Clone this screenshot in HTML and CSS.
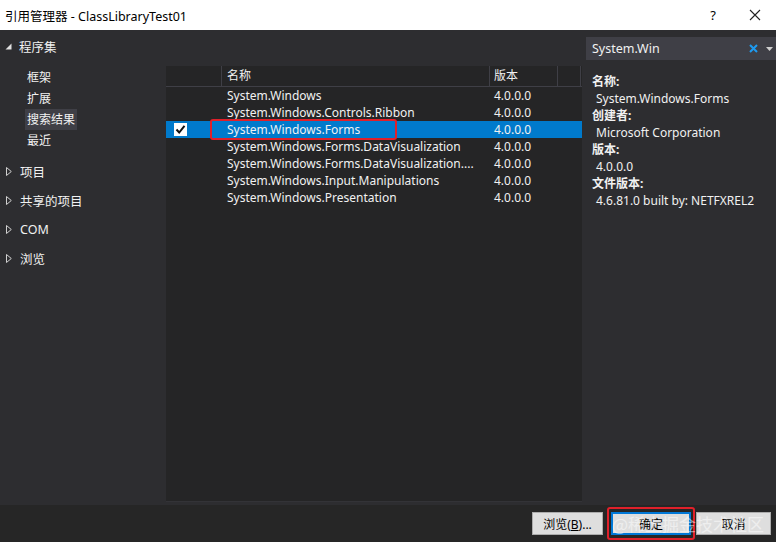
FILE: index.html
```html
<!DOCTYPE html>
<html lang="zh-CN">
<head>
<meta charset="utf-8">
<title>引用管理器</title>
<link rel="stylesheet" href="styles.css">
</head>
<body>
<div class="window">
  <div class="titlebar">
    <span class="title">引用管理器 - ClassLibraryTest01</span>
    <span class="tb-btn help">?</span>
    <span class="tb-btn close">
      <svg width="12" height="12" viewBox="0 0 12 12"><path d="M1 1 L11 11 M11 1 L1 11" stroke="#222" stroke-width="1.1"/></svg>
    </span>
  </div>
  <div class="main">
    <div class="nav">
      <div class="nav-head">
        <svg class="tri" width="7" height="7" viewBox="0 0 7 7"><path d="M6.5 0.5 V6.5 H0.5 Z" fill="#e0e0e0"/></svg>程序集
      </div>
      <div class="nav-sub">
        <div class="nav-item">框架</div>
        <div class="nav-item">扩展</div>
        <div class="nav-item active">搜索结果</div>
        <div class="nav-item">最近</div>
      </div>
      <div class="nav-group">
        <div class="nav-cat"><svg class="tri" width="6" height="9" viewBox="0 0 6 9"><path d="M0.5 0.5 L5.3 4.5 L0.5 8.5 Z" fill="none" stroke="#d0d0d0" stroke-width="1"/></svg>项目</div>
        <div class="nav-cat"><svg class="tri" width="6" height="9" viewBox="0 0 6 9"><path d="M0.5 0.5 L5.3 4.5 L0.5 8.5 Z" fill="none" stroke="#d0d0d0" stroke-width="1"/></svg>共享的项目</div>
        <div class="nav-cat"><svg class="tri" width="6" height="9" viewBox="0 0 6 9"><path d="M0.5 0.5 L5.3 4.5 L0.5 8.5 Z" fill="none" stroke="#d0d0d0" stroke-width="1"/></svg>COM</div>
        <div class="nav-cat"><svg class="tri" width="6" height="9" viewBox="0 0 6 9"><path d="M0.5 0.5 L5.3 4.5 L0.5 8.5 Z" fill="none" stroke="#d0d0d0" stroke-width="1"/></svg>浏览</div>
      </div>
    </div>
    <div class="center">
      <div class="list">
        <div class="row head">
          <div class="c-chk"></div>
          <div class="c-name">名称</div>
          <div class="c-ver">版本</div>
          <div class="c-extra"></div>
        </div>
        <div class="row"><div class="c-chk"></div><div class="c-name">System.Windows</div><div class="c-ver">4.0.0.0</div></div>
        <div class="row"><div class="c-chk"></div><div class="c-name">System.Windows.Controls.Ribbon</div><div class="c-ver">4.0.0.0</div></div>
        <div class="row sel">
          <div class="c-chk">
            <svg width="13" height="13" viewBox="0 0 13 13"><rect x="0.5" y="0.5" width="12" height="12" fill="#fff" stroke="#fff"/><path d="M2.5 6.5 L5.2 9.5 L10.5 2.8" fill="none" stroke="#111" stroke-width="2"/></svg>
          </div>
          <div class="c-name">System.Windows.Forms<span class="redbox"></span></div>
          <div class="c-ver">4.0.0.0</div>
        </div>
        <div class="row"><div class="c-chk"></div><div class="c-name">System.Windows.Forms.DataVisualization</div><div class="c-ver">4.0.0.0</div></div>
        <div class="row"><div class="c-chk"></div><div class="c-name">System.Windows.Forms.DataVisualization....</div><div class="c-ver">4.0.0.0</div></div>
        <div class="row"><div class="c-chk"></div><div class="c-name">System.Windows.Input.Manipulations</div><div class="c-ver">4.0.0.0</div></div>
        <div class="row"><div class="c-chk"></div><div class="c-name">System.Windows.Presentation</div><div class="c-ver">4.0.0.0</div></div>
      </div>
    </div>
    <div class="side">
      <div class="search">
        <span class="search-text">System.Win</span>
        <svg class="search-x" width="9" height="9" viewBox="0 0 9 9"><path d="M1 1 L8 8 M8 1 L1 8" stroke="#1e9bf0" stroke-width="2"/></svg>
        <svg class="search-dd" width="7" height="4" viewBox="0 0 7 4"><path d="M0 0 H7 L3.5 4 Z" fill="#d0d0d0"/></svg>
      </div>
      <div class="details">
        <div class="lbl">名称:</div>
        <div class="val">System.Windows.Forms</div>
        <div class="lbl">创建者:</div>
        <div class="val">Microsoft Corporation</div>
        <div class="lbl">版本:</div>
        <div class="val">4.0.0.0</div>
        <div class="lbl">文件版本:</div>
        <div class="val">4.6.81.0 built by: NETFXREL2</div>
      </div>
    </div>
  </div>
  <div class="footer">
    <button class="btn browse">浏览(<u>B</u>)...</button>
    <span class="ok-wrap"><button class="btn ok">确定</button></span>
    <button class="btn cancel">取消</button>
    <span class="watermark">@稀土掘金技术社区</span>
  </div>
</div>
</body>
</html>
```

FILE: styles.css
```css
* { box-sizing: border-box; }
html, body { margin: 0; padding: 0; }
body {
  width: 776px;
  height: 542px;
  overflow: hidden;
  font-family: "Segoe UI", "Noto Sans", "Noto Sans CJK SC", sans-serif;
  font-size: 12px;
  background: #2d2d30;
}
.window { width: 776px; height: 542px; display: flex; flex-direction: column; position: relative; }

.titlebar {
  height: 30px;
  background: #ffffff;
  color: #000;
  display: flex;
  align-items: center;
  padding-left: 5px;
}
.title { flex: 1; font-size: 12.5px; }
.tb-btn { display: flex; align-items: center; justify-content: center; height: 30px; }
.help { width: 20px; margin-right: 20px; font-size: 13px; }
.close { width: 24px; margin-right: 9px; }

.main { flex: 1; display: flex; color: #f1f1f1; }

.nav { width: 166px; padding-top: 6px; }
.nav-head { height: 20px; display: flex; align-items: center; padding-left: 5px; font-size: 12.5px; }
.nav-head .tri { margin-right: 7px; margin-top: 1px; }
.nav-sub { padding-top: 11px; padding-left: 25px; }
.nav-item { height: 21px; line-height: 21px; padding-left: 2px; width: max-content; padding-right: 2px; }
.nav-item.active { background: #3f3f46; }
.nav-group { padding-top: 6px; }
.nav-cat { height: 29px; display: flex; align-items: center; padding-left: 6px; font-size: 12.5px; }
.nav-cat .tri { margin-right: 8px; }

.center { width: 416px; padding-top: 36px; }
.list {
  height: 436px;
  background: #252526;
  border-bottom: 1px solid #333337;
}
.row { display: flex; height: 17px; line-height: 17px; }
.row.head { height: 21px; line-height: 19px; border-bottom: 1px solid #3f3f46; }
.row.head > div { border-right: 1px solid #3f3f46; }
.c-chk { width: 56px; display: flex; align-items: center; padding-left: 8px; }
.c-name { width: 268px; padding-left: 5px; white-space: nowrap; position: relative; }
.c-ver { width: 68px; padding-left: 4px; }
.c-extra { width: 23px; }
.row.sel { background: #007acc; width: 416px; }
.redbox {
  position: absolute;
  left: -12px; top: -2px;
  width: 187px; height: 21px;
  border: 2px solid #e0202a;
  border-radius: 3px;
}

.side { flex: 1; padding-left: 4px; padding-top: 7px; }
.search {
  height: 23px;
  background: #3f3f46;
  display: flex;
  align-items: center;
  padding-left: 6px;
  position: relative;
  font-size: 12.5px;
}
.search-text { flex: 1; color: #f1f1f1; }
.search-x { margin-right: 8px; }
.search-dd { margin-right: 3px; }
.details { padding-top: 13px; padding-left: 6px; }
.lbl, .val { height: 17px; line-height: 17px; white-space: nowrap; }
.lbl { font-weight: bold; }
.val { padding-left: 4px; }

.footer {
  height: 37px;
  background: #262626;
  display: flex;
  align-items: center;
  padding-left: 532px;
  position: relative;
}
.btn {
  font-family: "Segoe UI", "Noto Sans", "Noto Sans CJK SC", sans-serif;
  font-size: 12px;
  height: 23px;
  background: #dedede;
  color: #000;
  border: 1px solid #acacac;
  padding: 0;
}
.browse { width: 71px; }
.ok-wrap {
  margin-left: 4px;
  border: 2px solid #e0202a;
  border-radius: 3px;
  padding: 3px 2px;
  display: flex;
}
.ok { width: 80px; border: 1px solid #0078d7; box-shadow: inset 0 0 0 1px #0078d7; }
.cancel { width: 75px; margin-left: 1px; }
.watermark {
  position: absolute;
  left: 612px;
  top: 6px;
  font-size: 17px;
  color: rgba(255, 255, 255, 0.5);
  font-family: "Noto Sans CJK SC", sans-serif;
  pointer-events: none;
}
```
